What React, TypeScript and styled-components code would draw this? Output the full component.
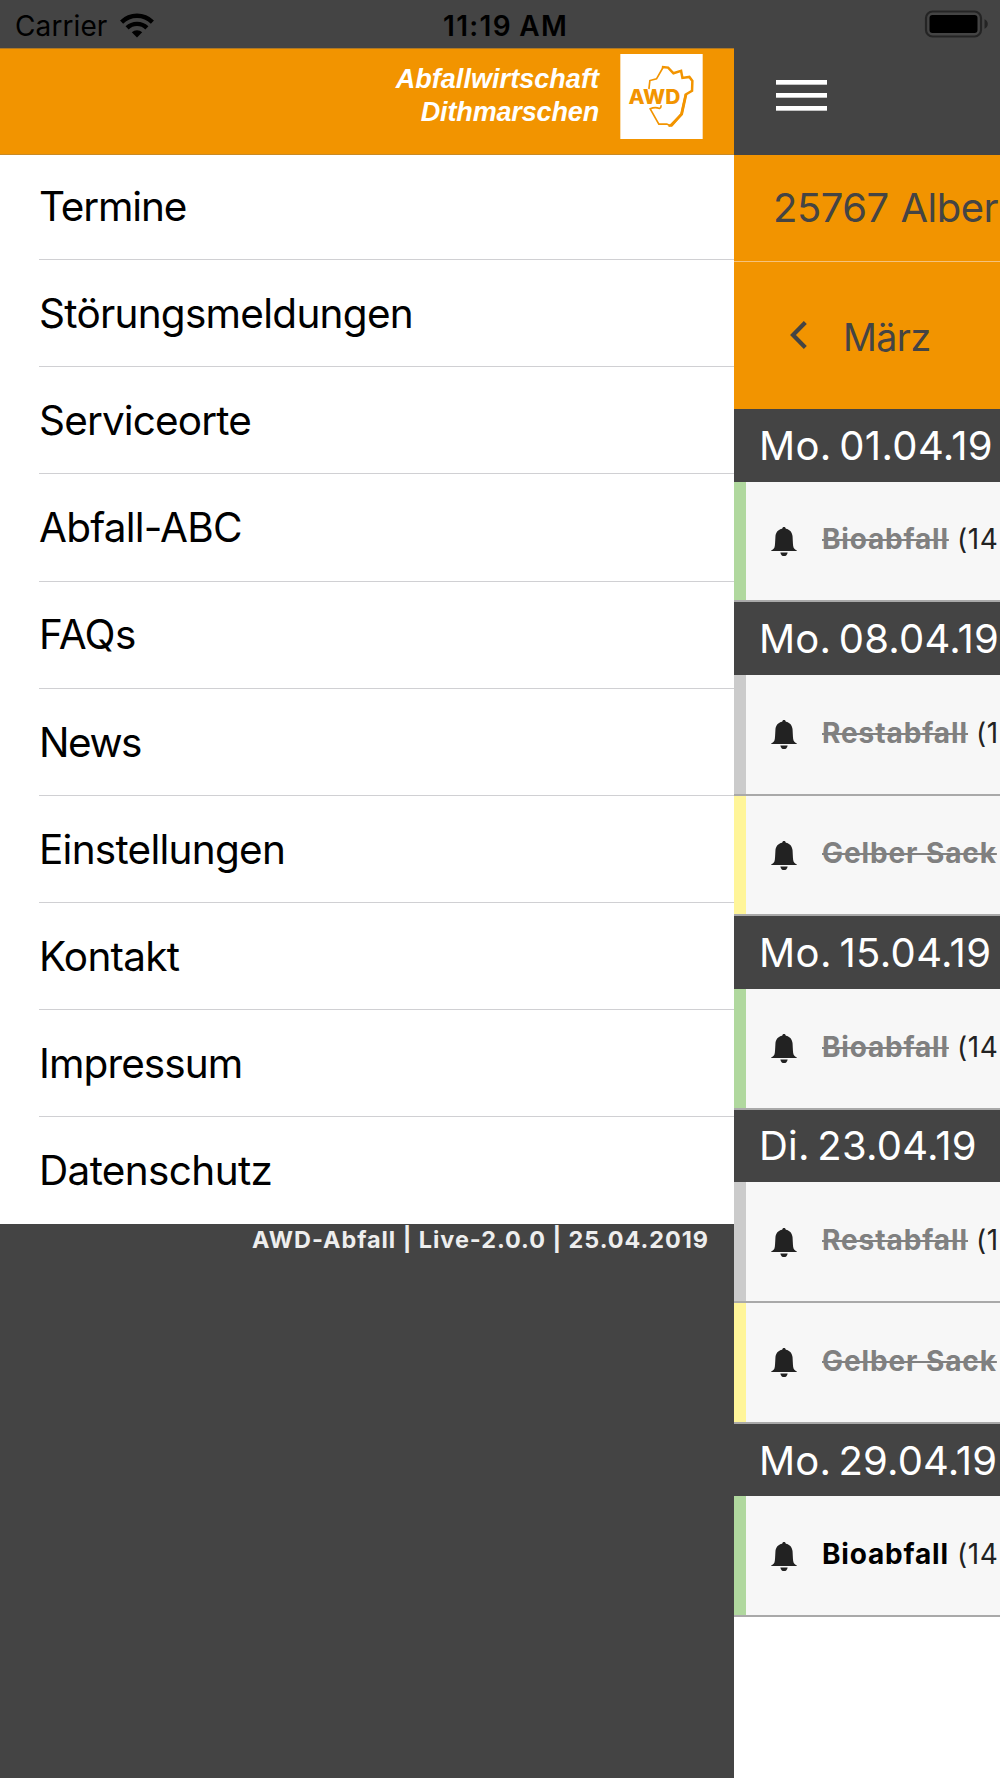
import React from 'react';
import styled, { createGlobalStyle } from 'styled-components';

const DARK = '#444444';
const ORANGE = '#f29400';

const GlobalStyle = createGlobalStyle`
  * { box-sizing: border-box; }
  body {
    margin: 0;
    background: ${DARK};
    font-family: Inter, "Liberation Sans", sans-serif;
    overflow: hidden;
  }
  svg { flex: none; }
`;

const Screen = styled.div`
  display: flex;
  flex-direction: column;
  width: 1000px;
  height: 1778px;
  overflow: hidden;
  background: ${DARK};
`;

const StatusBar = styled.header`
  display: grid;
  grid-template-columns: 428px auto 1fr;
  align-items: center;
  height: 48px;
  flex: none;
  padding: 4px 12px 0 15px;
  color: #000;
  font-size: 28px;
  line-height: 34px;
`;

const Carrier = styled.div`
  display: flex;
  align-items: center;
  gap: 13px;
  letter-spacing: 0.1px;

  svg { margin-top: -2px; }
`;

const Clock = styled.time`
  font-weight: 600;
  letter-spacing: 1.3px;
  word-spacing: -1px;
  white-space: nowrap;
`;

const BatterySlot = styled.div`
  display: flex;
  justify-content: flex-end;
  padding-bottom: 4px;
`;

const Columns = styled.div`
  display: flex;
  flex: 1;
  min-height: 0;
`;

const Drawer = styled.aside`
  display: flex;
  flex-direction: column;
  width: 734px;
  flex: none;
`;

const BrandBar = styled.div`
  display: flex;
  justify-content: flex-end;
  gap: 21px;
  height: 107px;
  padding: 5px 31px 0 0;
  background: ${ORANGE};
  border-top: 1px solid #b07822;
  border-bottom: 1px solid #c98a26;
`;

const BrandName = styled.div`
  padding-top: 9px;
  color: #fff;
  font: italic 700 27px/33px "Liberation Sans", Arial, sans-serif;
  text-align: right;
`;

const BrandLine = styled.div<{ $tracking: number }>`
  letter-spacing: ${(p) => p.$tracking}px;
`;

const Menu = styled.ul`
  margin: 0;
  padding: 0 0 0 39px;
  list-style: none;
  background: #fff;
`;

const MenuItem = styled.li<{ $tracking: number }>`
  display: flex;
  align-items: center;
  height: 107.1px;
  padding-top: 1.6px;
  border-bottom: 1px solid #d0d0d3;
  color: #000;
  font-size: 40.5px;
  line-height: 50px;
  letter-spacing: ${(p) => p.$tracking}px;

  &:first-child {
    height: 105.3px;
    padding-top: 0;
  }
  &:last-child { border-bottom: 0; }
`;

const Version = styled.div`
  padding: 2px 25px 0 0;
  color: #eeeeee;
  font-size: 23.4px;
  font-weight: 700;
  line-height: 28px;
  letter-spacing: 0.97px;
  text-align: right;
`;

const Page = styled.main`
  display: flex;
  flex-direction: column;
  flex: 1;
  min-width: 0;
  overflow: hidden;
  background: #fff;
  white-space: nowrap;
`;

const Toolbar = styled.div`
  height: 107px;
  flex: none;
  padding: 32px 0 0 42px;
  background: ${DARK};
`;

const MenuButton = styled.div`
  display: grid;
  gap: 8px;
  width: 51px;
`;

const MenuBar = styled.span`
  height: 5px;
  background: #fff;
  border-bottom: 1px solid #c4c4c4;
`;

const Place = styled.div`
  display: flex;
  align-items: center;
  height: 107px;
  flex: none;
  padding: 0 0 1px 39px;
  background: ${ORANGE};
  border-bottom: 1px solid #f5c27c;
  color: ${DARK};
  font-size: 40px;
  letter-spacing: -0.5px;
  word-spacing: 1px;
`;

const Month = styled.div`
  display: flex;
  align-items: center;
  gap: 36px;
  height: 147px;
  flex: none;
  padding: 4px 0 0 56px;
  background: ${ORANGE};
  color: ${DARK};
  font-size: 37.5px;
  letter-spacing: -0.55px;

  svg { margin-top: -6px; }
`;

const DateHeading = styled.h2<{ $tracking: number }>`
  display: flex;
  align-items: center;
  height: 72.5px;
  flex: none;
  margin: 0;
  padding-left: 25px;
  background: ${DARK};
  color: #fff;
  font-size: 40px;
  font-weight: 400;
  letter-spacing: ${(p) => p.$tracking}px;
  word-spacing: -4px;
`;

const Pickup = styled.div<{ $stripe: string }>`
  display: flex;
  align-items: center;
  height: 120.8px;
  flex: none;
  padding: 0 0 1px 37px;
  background: #f7f7f7;
  box-shadow: inset 0 -2px #a9a9a9, inset 12px 0 ${(p) => p.$stripe};
  font-size: 28px;
  line-height: 34px;
  color: #222;
`;

const WasteType = styled.span<{ $past: boolean; $tracking: number }>`
  flex: none;
  margin: -4px 8px 0 25px;
  color: ${(p) => (p.$past ? '#808080' : '#000')};
  font-weight: 700;
  letter-spacing: ${(p) => p.$tracking}px;
  text-decoration: ${(p) => (p.$past ? 'line-through' : 'none')};
  text-decoration-thickness: 2px;
`;

const Interval = styled.span`
  margin-top: -4px;
  letter-spacing: 0.6px;
`;

const WifiIcon = () => (
  <svg width="34" height="25" viewBox="0 0 34 25" fill="none" stroke="#000" strokeWidth="4.4">
    <path d="M1.6 9.1a22 22 0 0 1 30.8 0" />
    <path d="M7.1 14.9a14.2 14.2 0 0 1 19.8 0" />
    <path d="M17 24.5l-5.2-5.2a7.4 7.4 0 0 1 10.4 0z" fill="#000" stroke="none" />
  </svg>
);

const BatteryIcon = () => (
  <svg width="64" height="28" viewBox="0 0 64 28">
    <rect x="2" y="1.5" width="55" height="25" rx="6.5" fill="none" stroke="#242424" strokeWidth="2.2" />
    <rect x="5.5" y="5" width="48" height="18" rx="3" fill="#000" />
    <path d="M60.5 9.2c4.4 1.7 4.4 7.9 0 9.6z" fill="#242424" />
  </svg>
);

const LogoMark = () => (
  <svg width="83" height="85" viewBox="32 27 248 256" fill="none" stroke={ORANGE} strokeLinejoin="miter">
    <rect x="32" y="27" width="248" height="256" fill="#fff" stroke="none" />
    <path d="M118 133L121 107L141 102L161 67" strokeWidth="5" />
    <path d="M157 66L176 68L192 85L215 78L219 99L240 96L249 108L248 138L229 149L216 208L187 242L177 243" strokeWidth="7.5" />
    <path d="M230 148L217 208L183 243" strokeWidth="8" />
    <path d="M183 243L172 238L148 238L122 192Q136 186 150 191Q155 189 155 181" strokeWidth="5" />
    <text
      x="57"
      y="177"
      textLength="156"
      lengthAdjust="spacingAndGlyphs"
      fill={ORANGE}
      stroke="#fff"
      strokeWidth="4"
      paintOrder="stroke"
      fontFamily="Inter, sans-serif"
      fontWeight="800"
      fontSize="59"
    >
      AWD
    </text>
  </svg>
);

const ChevronIcon = () => (
  <svg width="17" height="28" viewBox="0 0 17 28" fill="none" stroke={DARK} strokeWidth="4.2">
    <path d="M15.3 1.5L3 14L15.3 26.5" />
  </svg>
);

const BellIcon = () => (
  <svg width="26" height="29" viewBox="62 82 78 88" fill="#222">
    <path d="M101 82c3 0 5 2 5.5 5C119 89 126 98 127 111c1 17 1 27 3 33c2 5 6 7 10 9v2H62v-2c4-2 8-4 10-9c2-6 2-16 3-33c1-13 8-22 20.5-24c.5-3 2.500-5 5.500-5z" />
    <path d="M90 159h22c-1 7-5 11-11 11s-10-4-11-11z" />
  </svg>
);

const menu = [
  { label: 'Termine', tracking: -1.15 },
  { label: 'Störungsmeldungen', tracking: -0.73 },
  { label: 'Serviceorte', tracking: -0.85 },
  { label: 'Abfall-ABC', tracking: -0.8 },
  { label: 'FAQs', tracking: -0.6 },
  { label: 'News', tracking: -1.5 },
  { label: 'Einstellungen', tracking: -0.74 },
  { label: 'Kontakt', tracking: -0.75 },
  { label: 'Impressum', tracking: -0.9 },
  { label: 'Datenschutz', tracking: -0.65 },
];

const waste = {
  bio: { name: 'Bioabfall', stripe: '#b0d89e', tracking: 0.82, interval: '(14' },
  rest: { name: 'Restabfall', stripe: '#cbcbcb', tracking: 0.93, interval: '(1' },
  yellow: { name: 'Gelber Sack', stripe: '#fff599', tracking: 0.9, interval: '' },
};

type Kind = keyof typeof waste;

const days: { date: string; tracking: number; past: boolean; pickups: Kind[] }[] = [
  { date: 'Mo. 01.04.19', tracking: 0.35, past: true, pickups: ['bio'] },
  { date: 'Mo. 08.04.19', tracking: 0.22, past: true, pickups: ['rest', 'yellow'] },
  { date: 'Mo. 15.04.19', tracking: 0.38, past: true, pickups: ['bio'] },
  { date: 'Di. 23.04.19', tracking: 0.25, past: true, pickups: ['rest', 'yellow'] },
  { date: 'Mo. 29.04.19', tracking: 0.15, past: false, pickups: ['bio'] },
];

export default function App() {
  return (
    <>
      <GlobalStyle />
      <Screen>
        <StatusBar>
          <Carrier>
            Carrier
            <WifiIcon />
          </Carrier>
          <Clock>11:19 AM</Clock>
          <BatterySlot>
            <BatteryIcon />
          </BatterySlot>
        </StatusBar>
        <Columns>
          <Drawer>
            <BrandBar>
              <BrandName>
                <BrandLine $tracking={0.05}>Abfallwirtschaft</BrandLine>
                <BrandLine $tracking={-0.15}>Dithmarschen</BrandLine>
              </BrandName>
              <LogoMark />
            </BrandBar>
            <Menu>
              {menu.map((item) => (
                <MenuItem key={item.label} $tracking={item.tracking}>
                  {item.label}
                </MenuItem>
              ))}
            </Menu>
            <Version>AWD-Abfall | Live-2.0.0 | 25.04.2019</Version>
          </Drawer>
          <Page>
            <Toolbar>
              <MenuButton>
                <MenuBar />
                <MenuBar />
                <MenuBar />
              </MenuButton>
            </Toolbar>
            <Place>25767 Alber</Place>
            <Month>
              <ChevronIcon />
              März
            </Month>
            {days.map((day) => (
              <React.Fragment key={day.date}>
                <DateHeading $tracking={day.tracking}>{day.date}</DateHeading>
                {day.pickups.map((kind) => (
                  <Pickup key={kind} $stripe={waste[kind].stripe}>
                    <BellIcon />
                    <WasteType $past={day.past} $tracking={waste[kind].tracking}>
                      {waste[kind].name}
                    </WasteType>
                    {waste[kind].interval && <Interval>{waste[kind].interval}</Interval>}
                  </Pickup>
                ))}
              </React.Fragment>
            ))}
          </Page>
        </Columns>
      </Screen>
    </>
  );
}
